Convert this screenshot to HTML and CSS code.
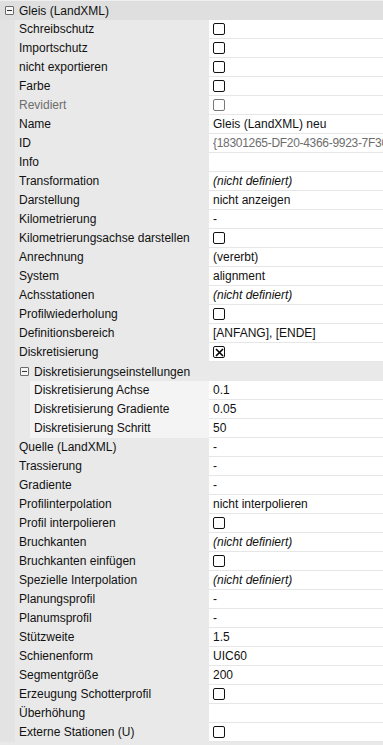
FILE: index.html
```html
<!DOCTYPE html>
<html>
<head>
<meta charset="utf-8">
<title>Eigenschaften</title>
<link rel="stylesheet" href="styles.css">
</head>
<body>
<div class="grid">
  <div class="cat"><span class="toggle"></span>Gleis (LandXML)</div>

  <div class="row"><div class="label">Schreibschutz</div><div class="value"><span class="cb"></span></div></div>
  <div class="row"><div class="label">Importschutz</div><div class="value"><span class="cb"></span></div></div>
  <div class="row"><div class="label">nicht exportieren</div><div class="value"><span class="cb"></span></div></div>
  <div class="row"><div class="label">Farbe</div><div class="value"><span class="cb"></span></div></div>
  <div class="row"><div class="label ro">Revidiert</div><div class="value"><span class="cb ro"></span></div></div>
  <div class="row"><div class="label">Name</div><div class="value">Gleis (LandXML) neu</div></div>
  <div class="row"><div class="label">ID</div><div class="value ro guid">{18301265-DF20-4366-9923-7F30</div></div>
  <div class="row"><div class="label">Info</div><div class="value"></div></div>
  <div class="row"><div class="label">Transformation</div><div class="value undef">(nicht definiert)</div></div>
  <div class="row"><div class="label">Darstellung</div><div class="value">nicht anzeigen</div></div>
  <div class="row"><div class="label">Kilometrierung</div><div class="value">-</div></div>
  <div class="row"><div class="label">Kilometrierungsachse darstellen</div><div class="value"><span class="cb"></span></div></div>
  <div class="row"><div class="label">Anrechnung</div><div class="value">(vererbt)</div></div>
  <div class="row"><div class="label">System</div><div class="value">alignment</div></div>
  <div class="row"><div class="label">Achsstationen</div><div class="value undef">(nicht definiert)</div></div>
  <div class="row"><div class="label">Profilwiederholung</div><div class="value"><span class="cb"></span></div></div>
  <div class="row"><div class="label">Definitionsbereich</div><div class="value">[ANFANG], [ENDE]</div></div>
  <div class="row"><div class="label">Diskretisierung</div><div class="value"><span class="cb checked"><svg width="9" height="9" viewBox="0 0 9 9"><path d="M1 1L8 8M8 1L1 8" stroke="#000" stroke-width="1.6"/></svg></span></div></div>

  <div class="subcat"><span class="toggle"></span>Diskretisierungseinstellungen</div>
  <div class="row sub"><div class="label">Diskretisierung Achse</div><div class="value">0.1</div></div>
  <div class="row sub"><div class="label">Diskretisierung Gradiente</div><div class="value">0.05</div></div>
  <div class="row sub"><div class="label">Diskretisierung Schritt</div><div class="value">50</div></div>

  <div class="row"><div class="label">Quelle (LandXML)</div><div class="value">-</div></div>
  <div class="row"><div class="label">Trassierung</div><div class="value">-</div></div>
  <div class="row"><div class="label">Gradiente</div><div class="value">-</div></div>
  <div class="row"><div class="label">Profilinterpolation</div><div class="value">nicht interpolieren</div></div>
  <div class="row"><div class="label">Profil interpolieren</div><div class="value"><span class="cb"></span></div></div>
  <div class="row"><div class="label">Bruchkanten</div><div class="value undef">(nicht definiert)</div></div>
  <div class="row"><div class="label">Bruchkanten einfügen</div><div class="value"><span class="cb"></span></div></div>
  <div class="row"><div class="label">Spezielle Interpolation</div><div class="value undef">(nicht definiert)</div></div>
  <div class="row"><div class="label">Planungsprofil</div><div class="value">-</div></div>
  <div class="row"><div class="label">Planumsprofil</div><div class="value">-</div></div>
  <div class="row"><div class="label">Stützweite</div><div class="value">1.5</div></div>
  <div class="row"><div class="label">Schienenform</div><div class="value">UIC60</div></div>
  <div class="row"><div class="label">Segmentgröße</div><div class="value">200</div></div>
  <div class="row"><div class="label">Erzeugung Schotterprofil</div><div class="value"><span class="cb"></span></div></div>
  <div class="row"><div class="label">Überhöhung</div><div class="value"></div></div>
  <div class="row"><div class="label">Externe Stationen (U)</div><div class="value"><span class="cb"></span></div></div>
</div>
</body>
</html>
```

FILE: styles.css
```css
html, body {
    margin: 0;
    padding: 0;
    background: #e9e9e9;
}

body {
    font-family: "Liberation Sans", Arial, sans-serif;
    font-size: 12px;
    color: #111;
    width: 383px;
    height: 745px;
    overflow: hidden;
}

.grid {
    display: flex;
    flex-direction: column;
}

/* category header */
.cat {
    height: 19px;
    border-top: 1px solid #efefef;
    background: #dfdfdf;
    display: flex;
    align-items: center;
    padding-left: 5px;
}

.subcat {
    height: 19px;
    display: flex;
    align-items: center;
    padding-left: 20px;
    background: linear-gradient(to right, #e3e3e3 15px, #e9e9e9 15px);
}

.toggle {
    width: 7px;
    height: 7px;
    border: 1px solid #6b6b6b;
    border-radius: 1px;
    margin-right: 5px;
    position: relative;
    background: #f4f4f4;
}

.toggle::after {
    content: "";
    position: absolute;
    left: 1px;
    top: 3px;
    width: 5px;
    height: 1px;
    background: #333;
}

/* property rows */
.row {
    display: grid;
    grid-template-columns: 15px 194px 1fr;
    height: 19px;
}

.row::before {
    content: "";
    background: #e3e3e3;
}

.label {
    background: #e9e9e9;
    padding-left: 4px;
    line-height: 18px;
    white-space: nowrap;
    overflow: hidden;
}

.row.sub .label {
    border-left: 15px solid #e9e9e9;
    background: #f4f4f4;
}

.value {
    background: #fff;
    border-bottom: 1px solid #e6e6e6;
    padding-left: 4px;
    line-height: 18px;
    white-space: nowrap;
    overflow: hidden;
    display: flex;
    align-items: center;
}

.ro {
    color: #6d6d6d;
}

.guid {
    letter-spacing: -0.3px;
}

.undef {
    font-style: italic;
}

.cb {
    box-sizing: border-box;
    width: 12px;
    height: 12px;
    border: 1px solid #111;
    border-radius: 2px;
    background: #fff;
    display: flex;
    align-items: center;
    justify-content: center;
}

.cb.ro {
    border-color: #777;
}
```
